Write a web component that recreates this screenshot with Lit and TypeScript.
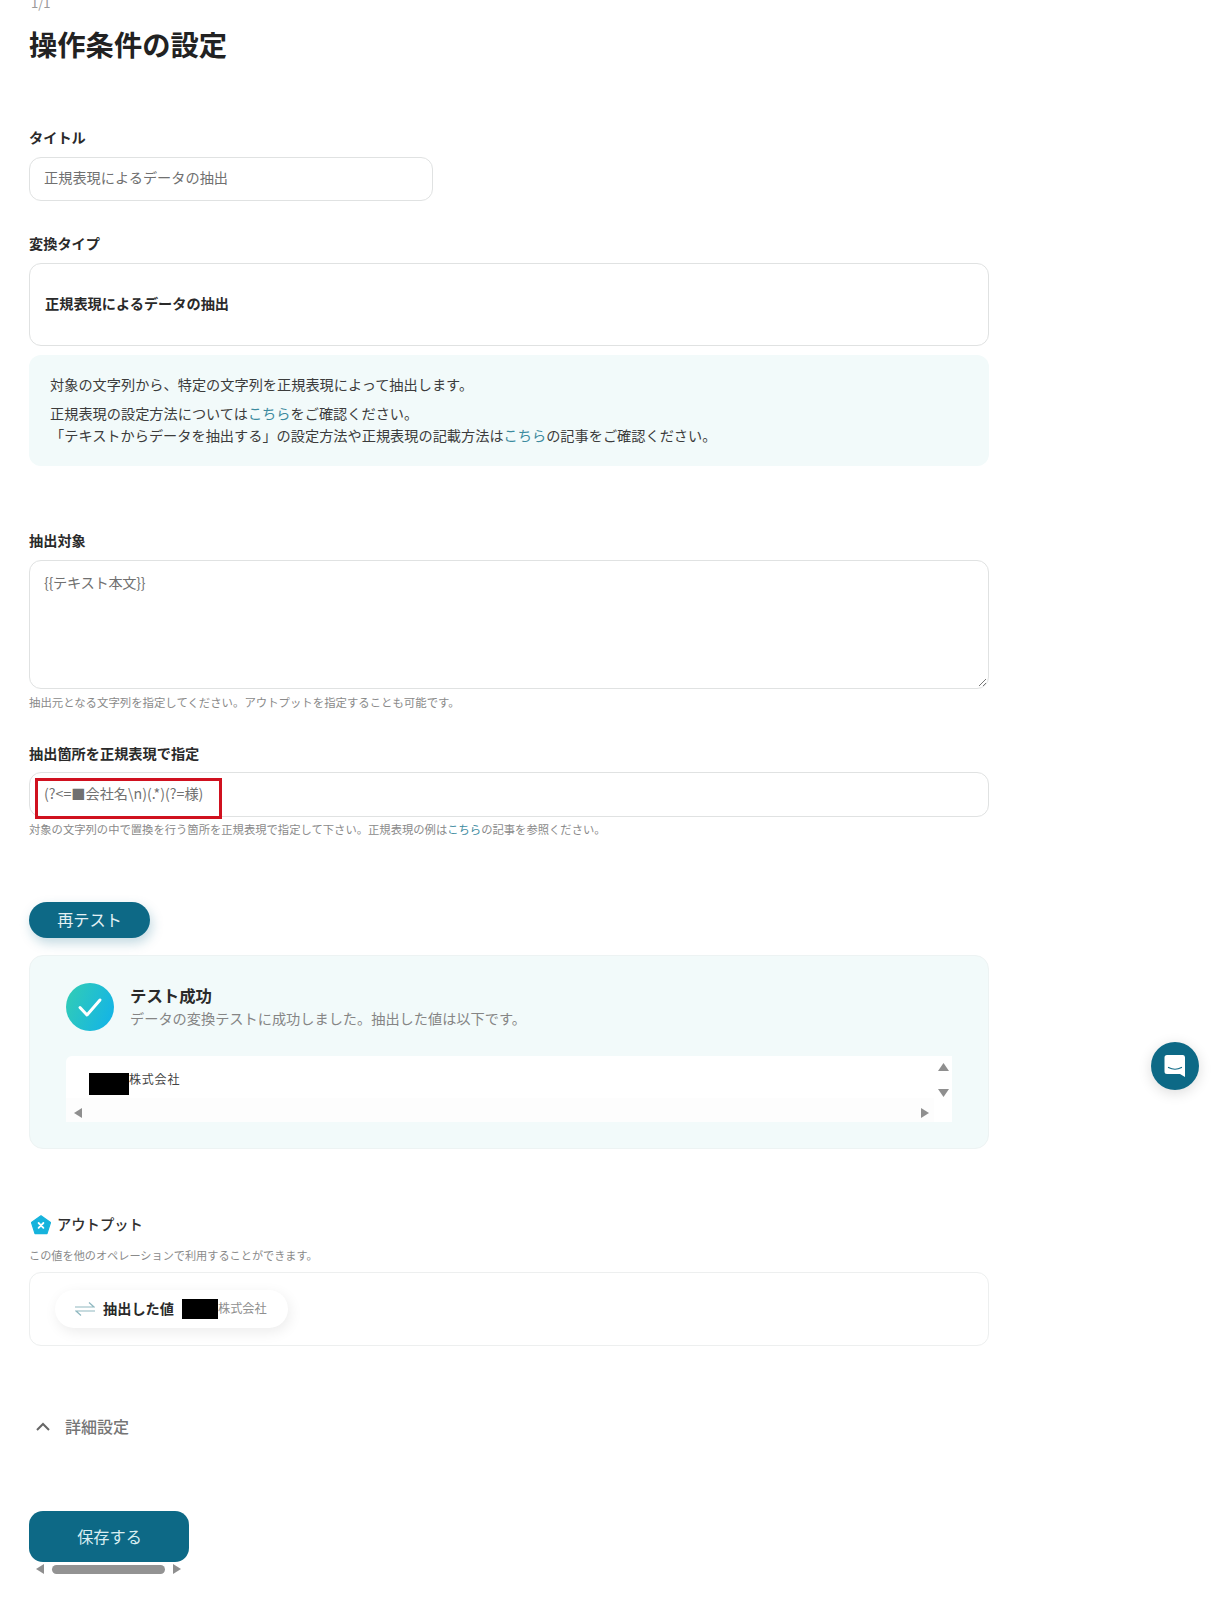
import { LitElement, html, css } from "lit";
import { customElement } from "lit/decorators.js";

@customElement("app-root")
export class AppRoot extends LitElement {
  static styles = css`
    :host {
      display: block;
      position: relative;
      width: 1220px;
      height: 1600px;
      overflow: hidden;
      background: #fff;
      color: #2f2f2f;
      font-family: "Noto Sans CJK JP", "Noto Sans", sans-serif;
      font-size: 14.2px;
    }
    .page { display: flex; flex-direction: column; align-items: flex-start; padding-left: 29px; width: 960px; }
    .counter { margin: -4px 0 0 2px; height: 14px; line-height: 14px; font-size: 13px; color: #999; }
    h1 { margin: 14px 0 0; font-size: 28.3px; line-height: 40px; font-weight: 700; color: #222; }
    .label { font-size: 14.2px; line-height: 20px; font-weight: 700; color: #2a2a2a; }
    .l1 { margin-top: 63px; }
    .l2 { margin-top: 32px; }
    .l3 { margin-top: 64px; }
    .l4 { margin-top: 34px; }
    .field {
      box-sizing: border-box;
      border: 1px solid #e0e2e2;
      border-radius: 12px;
      background: #fff;
      padding: 0 14px 4px;
      display: flex;
      align-items: center;
      color: #707070;
      line-height: 20px;
    }
    .title-input { width: 404px; height: 44px; margin-top: 10px; }
    .type { width: 960px; height: 83px; margin-top: 10px; font-weight: 700; color: #2a2a2a; padding-left: 15px; }
    .info {
      box-sizing: border-box;
      width: 960px;
      height: 111px;
      margin-top: 9px;
      padding: 19px 21px;
      background: #f2fafa;
      border-radius: 12px;
      color: #3c3c3c;
    }
    .info p { margin: 0; line-height: 20px; }
    .info p + p { margin-top: 8px; line-height: 22px; }
    a { color: #3d8b9f; text-decoration: none; }
    .area {
      position: relative;
      width: 960px;
      height: 129px;
      margin-top: 10px;
      padding-top: 11px;
      align-items: flex-start;
      letter-spacing: -0.25px;
    }
    .grip { position: absolute; right: 1px; bottom: 1px; }
    .help { margin-top: 6px; font-size: 11.4px; line-height: 14px; color: #8a8a8a; }
    .regex { position: relative; width: 960px; height: 45px; margin-top: 9px; }
    .after-regex { margin-top: 5px; font-size: 11.32px; }
    .mark {
      position: absolute;
      left: 5px;
      top: 5px;
      width: 187px;
      height: 41px;
      box-sizing: border-box;
      border: 3px solid #d0111f;
    }
    .retest {
      box-sizing: border-box;
      width: 121px;
      height: 36px;
      margin-top: 66px;
      padding-bottom: 2px;
      border-radius: 18px;
      background: #0d6986;
      color: #e4f1f4;
      font-size: 16.2px;
      display: flex;
      align-items: center;
      justify-content: center;
      box-shadow: 2px 5px 12px rgba(13, 105, 134, 0.25);
    }
    .card {
      box-sizing: border-box;
      width: 960px;
      height: 194px;
      margin-top: 17px;
      padding: 27px 36px 0;
      border: 1px solid #edf3f3;
      border-radius: 14px;
      background: #f2fafa;
    }
    .head { display: flex; align-items: flex-start; gap: 16px; }
    .check { width: 48px; height: 48px; display: block; flex: none; }
    .head-title { font-size: 16.4px; font-weight: 700; line-height: 24px; color: #2a2a2a; }
    .head-sub { line-height: 22px; color: #858585; }
    .result {
      display: grid;
      grid-template-columns: 1fr 18px;
      grid-template-rows: 1fr 24px;
      width: 886px;
      height: 66px;
      margin-top: 25px;
      background: #fff;
      border-radius: 6px 0 0 0;
    }
    .result-text { display: flex; align-items: flex-start; padding: 17px 0 0 23px; font-size: 12px; line-height: 12px; letter-spacing: 0.8px; color: #444; }
    .redact { display: block; background: #000; flex: none; }
    .r1 { width: 40px; height: 22px; }
    .r2 { width: 36px; height: 20px; margin-left: 8px; }
    .vbar { box-sizing: border-box; display: flex; flex-direction: column; align-items: center; justify-content: space-between; padding: 7px 0 1px; grid-row: 1 / span 2; grid-column: 2; height: 42px; }
    .hbar { display: flex; align-items: center; justify-content: space-between; padding: 6px 5px 0 8px; background: #fdfdfd; grid-row: 2; grid-column: 1; }
    .tri { display: block; fill: #8f8f8f; }
    .out-head { display: flex; align-items: center; gap: 6px; margin-top: 64px; margin-left: 2px; height: 20px; font-weight: 500; font-size: 14.3px; }
    .out-head svg { margin-top: 4px; }
    .out-help { margin-top: 15px; font-size: 11.16px; }
    .out-box {
      box-sizing: border-box;
      width: 960px;
      height: 74px;
      margin-top: 10px;
      padding: 17px 0 0 25px;
      border: 1px solid #edefef;
      border-radius: 12px;
    }
    .pill {
      display: flex;
      align-items: center;
      box-sizing: border-box;
      width: 233px;
      height: 38px;
      padding-left: 20px;
      border-radius: 19px;
      background: #fff;
      box-shadow: 2px 4px 14px rgba(0, 0, 0, 0.08);
    }
    .pill b { margin: 0 0 3px 8px; font-size: 14.2px; font-weight: 700; color: #2a2a2a; }
    .pill span { margin-bottom: 3px; font-size: 12.2px; color: #8f8f8f; }
    .details { display: flex; align-items: center; gap: 15px; margin: 70px 0 0 7px; height: 20px; font-size: 16px; font-weight: 500; color: #757575; }
    .save {
      box-sizing: border-box;
      width: 160px;
      height: 51px;
      margin-top: 75px;
      padding: 0 0 2px 1px;
      border-radius: 14px;
      background: #0d6986;
      color: #d8eef2;
      font-size: 16.2px;
      display: flex;
      align-items: center;
      justify-content: center;
    }
    .pagebar { display: flex; align-items: center; width: 160px; height: 12px; margin-top: 1px; padding-left: 7px; box-sizing: border-box; }
    .thumb { width: 113px; height: 9px; border-radius: 5px; background: #939393; margin: 0 8px 0 8px; }
    .chat {
      position: absolute;
      left: 1151px;
      top: 1042px;
      width: 48px;
      height: 48px;
      border-radius: 50%;
      background: #0d6986;
      box-shadow: 0 3px 14px rgba(0, 0, 0, 0.14);
      display: flex;
      align-items: center;
      justify-content: center;
    }
  `;

  private tri(dir: "l" | "r" | "u" | "d") {
    const pts = { l: "8,0 8,10 0,5", r: "0,0 8,5 0,10", u: "0,8 5.5,0 11,8", d: "0,0 11,0 5.5,8" }[dir];
    const h = dir === "l" || dir === "r";
    return html`<svg class="tri" width=${h ? 8 : 11} height=${h ? 10 : 8} viewBox=${h ? "0 0 8 10" : "0 0 11 8"}><polygon points=${pts}></polygon></svg>`;
  }

  render() {
    return html`
      <div class="page">
        <div class="counter">1/1</div>
        <h1>操作条件の設定</h1>

        <div class="label l1">タイトル</div>
        <div class="field title-input">正規表現によるデータの抽出</div>

        <div class="label l2">変換タイプ</div>
        <div class="field type">正規表現によるデータの抽出</div>
        <div class="info">
          <p>対象の文字列から、特定の文字列を正規表現によって抽出します。</p>
          <p>正規表現の設定方法については<a>こちら</a>をご確認ください。<br />「テキストからデータを抽出する」の設定方法や正規表現の記載方法は<a>こちら</a>の記事をご確認ください。</p>
        </div>

        <div class="label l3">抽出対象</div>
        <div class="field area">
          {{テキスト本文}}
          <svg class="grip" width="10" height="10" viewBox="0 0 10 10">
            <path d="M9 2 2 9M9 6 6 9" stroke="#777" stroke-width="1" fill="none"></path>
          </svg>
        </div>
        <div class="help">抽出元となる文字列を指定してください。アウトプットを指定することも可能です。</div>

        <div class="label l4">抽出箇所を正規表現で指定</div>
        <div class="field regex">
          (?&lt;=■会社名\\n)(.*)(?=様)
          <div class="mark"></div>
        </div>
        <div class="help after-regex">対象の文字列の中で置換を行う箇所を正規表現で指定して下さい。正規表現の例は<a>こちら</a>の記事を参照ください。</div>

        <div class="retest">再テスト</div>

        <div class="card">
          <div class="head">
            <svg class="check" viewBox="0 0 48 48">
              <defs>
                <linearGradient id="cg" x1="0" y1="0.3" x2="1" y2="0.7">
                  <stop offset="0" stop-color="#30cbb8"></stop>
                  <stop offset="1" stop-color="#14b4e6"></stop>
                </linearGradient>
              </defs>
              <circle cx="24" cy="24" r="24" fill="url(#cg)"></circle>
              <path d="M14 24.5 21 32 34 17" fill="none" stroke="#fff" stroke-width="3" stroke-linecap="round" stroke-linejoin="round"></path>
            </svg>
            <div>
              <div class="head-title">テスト成功</div>
              <div class="head-sub">データの変換テストに成功しました。抽出した値は以下です。</div>
            </div>
          </div>
          <div class="result">
            <div class="result-text"><i class="redact r1"></i><span>株式会社</span></div>
            <div class="vbar">${this.tri("u")}${this.tri("d")}</div>
            <div class="hbar">${this.tri("l")}${this.tri("r")}</div>
          </div>
        </div>

        <div class="out-head">
          <svg width="20" height="20" viewBox="0 0 20 20">
            <path d="M10 .8 19.5 7.6 16 18.6H4L.5 7.6Z" fill="#16b3dc" stroke="#16b3dc" stroke-width="1.2" stroke-linejoin="round"></path>
            <path d="M7.6 8 12.4 12.8M12.4 8 7.6 12.8" stroke="#fff" stroke-width="1.8" stroke-linecap="round"></path>
          </svg>
          アウトプット
        </div>
        <div class="help out-help">この値を他のオペレーションで利用することができます。</div>
        <div class="out-box">
          <div class="pill">
            <svg width="20" height="16" viewBox="0 0 20 16">
              <path d="M0 6H19L14 1.5" fill="none" stroke="#8fb8c0" stroke-width="1.2"></path>
              <path d="M20 10H1L6 14.5" fill="none" stroke="#8fb8c0" stroke-width="1.2"></path>
            </svg>
            <b>抽出した値</b>
            <i class="redact r2"></i>
            <span>株式会社</span>
          </div>
        </div>

        <div class="details">
          <svg width="14" height="9" viewBox="0 0 14 9">
            <path d="M1 8 7 2 13 8" fill="none" stroke="#666" stroke-width="2"></path>
          </svg>
          詳細設定
        </div>

        <div class="save">保存する</div>
        <div class="pagebar">${this.tri("l")}<div class="thumb"></div>${this.tri("r")}</div>
      </div>

      <div class="chat">
        <svg width="24" height="26" viewBox="0 0 24 26">
          <path d="M4 2H20A2.500 2.500 0 0 1 22 4.500V24L17 21H4A2.500 2.500 0 0 1 1.500 18.500V4.500A2.500 2.500 0 0 1 4 2Z" fill="#fff"></path>
          <path d="M5.500 14.500Q12 18 18.500 14.500" fill="none" stroke="#0d6986" stroke-width="1.200" stroke-linecap="round"></path>
        </svg>
      </div>
    `;
  }
}
